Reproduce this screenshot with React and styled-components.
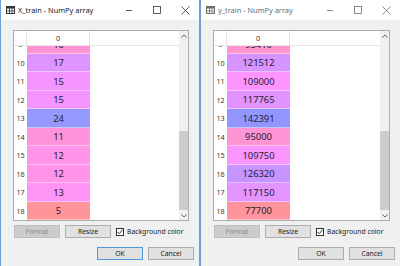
import React from 'react';
import styled, { createGlobalStyle } from 'styled-components';

const Global = createGlobalStyle`
  html, body { margin: 0; padding: 0; background: #f0f0f0; overflow: hidden; }
  body { font-family: "Noto Sans", "Open Sans", sans-serif; }
  * { box-sizing: border-box; }
`;

const Desktop = styled.div`
  display: flex;
  width: 400px;
  height: 266px;
  overflow: hidden;
`;

const Window = styled.div`
  flex: 0 0 ${p => p.$w}px;
  height: 266px;
  display: flex;
  flex-direction: column;
  background: #f0f0f0;
  border-left: 1px solid #6a9fd8;
  border-right: 1px solid #6a9fd8;
`;

const TitleBar = styled.div`
  height: 20px;
  flex: 0 0 20px;
  background: #ffffff;
  display: flex;
  align-items: center;
  padding-left: 5px;
`;

const TitleText = styled.span`
  margin-left: 3px;
  font-size: 7.4px;
  color: ${p => (p.$active ? '#1a1a1a' : '#6e6e6e')};
  white-space: nowrap;
  flex: 1;
`;

const Controls = styled.div`
  display: flex;
  height: 100%;
`;

const CtrlButton = styled.div`
  width: 28px;
  height: 100%;
  display: flex;
  align-items: center;
  justify-content: center;
`;

const Body = styled.div`
  flex: 1;
  display: flex;
  flex-direction: column;
  padding: 10px 10px 0 12px;
`;

const Frame = styled.div`
  height: 191px;
  border: 1px solid #adadad;
  display: flex;
  background: #ffffff;
`;

const TableView = styled.div`
  flex: 1;
  display: flex;
  flex-direction: column;
  min-width: 0;
`;

const HeaderRow = styled.div`
  height: 15px;
  flex: 0 0 15px;
  display: flex;
  border-bottom: 1px solid #e6e6e6;
`;

const IndexHeader = styled.div`
  width: 13px;
  border-right: 1px solid #e0e0e0;
`;

const ColHeader = styled.div`
  width: 63px;
  border-right: 1px solid #e0e0e0;
  font-size: 7.4px;
  color: #333;
  display: flex;
  align-items: center;
  justify-content: center;
`;

const Rows = styled.div`
  flex: 1;
  display: flex;
  flex-direction: column;
  justify-content: flex-end;
  overflow: hidden;
`;

const Row = styled.div`
  height: 18.5px;
  flex: 0 0 18.5px;
  display: flex;
`;

const IndexCell = styled.div`
  width: 13px;
  font-size: 7.2px;
  color: #333;
  display: flex;
  align-items: center;
  justify-content: center;
`;

const DataCell = styled.div`
  width: 63px;
  background: ${p => p.$bg};
  border-bottom: 1px solid rgba(255, 255, 255, 0.45);
  font-size: 9.4px;
  color: #262233;
  display: flex;
  align-items: center;
  justify-content: center;
  padding-top: 1px;
`;

const Scrollbar = styled.div`
  width: 9px;
  flex: 0 0 9px;
  background: #f0f0f0;
  display: flex;
  flex-direction: column;
`;

const Arrow = styled.div`
  height: 9px;
  flex: 0 0 9px;
  display: flex;
  align-items: center;
  justify-content: center;
`;

const Track = styled.div`
  flex: 1;
  display: flex;
  flex-direction: column;
  justify-content: flex-end;
  padding-bottom: 1px;
`;

const Thumb = styled.div`
  height: 79px;
  background: #cdcdcd;
`;

const ButtonRow = styled.div`
  display: flex;
  align-items: center;
  gap: 5px;
  margin-top: 4px;
  padding-left: 1px;
`;

const OkRow = styled.div`
  display: flex;
  justify-content: flex-end;
  gap: 5px;
  margin-top: 9px;
  margin-right: -5px;
`;

const Button = styled.div`
  width: 46px;
  height: 13px;
  display: flex;
  align-items: center;
  justify-content: center;
  font-size: 6.8px;
  border: 1px solid ${p => (p.$disabled ? '#bfbfbf' : p.$default ? '#4f95d8' : '#adadad')};
  background: ${p => (p.$disabled ? '#cccccc' : '#e1e1e1')};
  color: ${p => (p.$disabled ? '#8a8a8a' : '#222')};
`;

const CheckWrap = styled.div`
  display: flex;
  align-items: center;
  gap: 3px;
  margin-left: 0px;
`;

const Box = styled.div`
  width: 8px;
  height: 8px;
  border: 1px solid #333;
  background: #fff;
  display: flex;
  align-items: center;
  justify-content: center;
`;

const Label = styled.span`
  font-size: 6.8px;
  color: #222;
  white-space: nowrap;
`;

function cellColor(v, vmin, vmax) {
  const h = (0.66 + 0.33 * (vmax - v) / (vmax - vmin)) * 360;
  const max = 255, min = 255 * 0.3;
  const seg = h / 60;
  const i = Math.floor(seg) % 6;
  const f = seg - Math.floor(seg);
  const up = min + (max - min) * f;
  const down = max - (max - min) * f;
  const map = [
    [max, up, min], [down, max, min], [min, max, up],
    [min, down, max], [up, min, max], [max, min, down],
  ][i];
  const [r, g, b] = map.map(c => Math.round(0.6 * c + 0.4 * 255));
  return `rgb(${r},${g},${b})`;
}

const GridIcon = ({ color }) => (
  <svg width="9" height="8" viewBox="0 0 9 8">
    <rect x="0.5" y="0.5" width="8" height="7" fill="none" stroke={color} />
    <rect x="0.5" y="0.5" width="8" height="2" fill={color} />
    <line x1="3.5" y1="2" x2="3.5" y2="7.5" stroke={color} strokeWidth="0.8" />
    <line x1="6" y1="2" x2="6" y2="7.5" stroke={color} strokeWidth="0.8" />
    <line x1="0.5" y1="5" x2="8.5" y2="5" stroke={color} strokeWidth="0.8" />
  </svg>
);

const MinIcon = ({ color }) => (
  <svg width="8" height="8" viewBox="0 0 8 8">
    <line x1="1" y1="4.5" x2="7" y2="4.5" stroke={color} strokeWidth="0.8" />
  </svg>
);

const MaxIcon = ({ color }) => (
  <svg width="8" height="8" viewBox="0 0 8 8">
    <rect x="0.5" y="0.5" width="7" height="7" fill="none" stroke={color} strokeWidth="0.8" />
  </svg>
);

const CloseIcon = ({ color }) => (
  <svg width="9" height="9" viewBox="0 0 9 9">
    <path d="M0.5 0.5 L8.5 8.5 M8.5 0.5 L0.5 8.5" stroke={color} strokeWidth="0.8" />
  </svg>
);

const Chevron = ({ up }) => (
  <svg width="6" height="4" viewBox="0 0 6 4">
    <polyline points={up ? '0.5,3.5 3,1 5.5,3.5' : '0.5,0.5 3,3 5.5,0.5'} fill="none" stroke="#606060" strokeWidth="1" />
  </svg>
);

const CheckMark = () => (
  <svg width="6" height="6" viewBox="0 0 6 6">
    <polyline points="0.6,3 2.3,4.8 5.4,0.8" fill="none" stroke="#222" strokeWidth="0.9" />
  </svg>
);

function ArrayWindow({ title, data, vmin, vmax, width, active }) {
  const ic = active ? '#333' : '#6e6e6e';
  return (
    <Window $w={width}>
      <TitleBar>
        <GridIcon color={ic} />
        <TitleText $active={active}>{title}</TitleText>
        <Controls>
          <CtrlButton><MinIcon color={ic} /></CtrlButton>
          <CtrlButton><MaxIcon color={ic} /></CtrlButton>
          <CtrlButton><CloseIcon color={ic} /></CtrlButton>
        </Controls>
      </TitleBar>
      <Body>
        <Frame>
          <TableView>
            <HeaderRow>
              <IndexHeader />
              <ColHeader>0</ColHeader>
            </HeaderRow>
            <Rows>
              {data.map(([i, v]) => (
                <Row key={i}>
                  <IndexCell>{i}</IndexCell>
                  <DataCell $bg={cellColor(v, vmin, vmax)}>{v}</DataCell>
                </Row>
              ))}
            </Rows>
          </TableView>
          <Scrollbar>
            <Arrow><Chevron up /></Arrow>
            <Track><Thumb /></Track>
            <Arrow><Chevron /></Arrow>
          </Scrollbar>
        </Frame>
        <ButtonRow>
          <Button $disabled>Format</Button>
          <Button>Resize</Button>
          <CheckWrap>
            <Box><CheckMark /></Box>
            <Label>Background color</Label>
          </CheckWrap>
        </ButtonRow>
        <OkRow>
          <Button $default={active}>OK</Button>
          <Button>Cancel</Button>
        </OkRow>
      </Body>
    </Window>
  );
}

const xTrain = [[9, 10], [10, 17], [11, 15], [12, 15], [13, 24], [14, 11], [15, 12], [16, 12], [17, 13], [18, 5]];
const yTrain = [[9, 93410], [10, 121512], [11, 109000], [12, 117765], [13, 142391], [14, 95000], [15, 109750], [16, 126320], [17, 117150], [18, 77700]];

export default function App() {
  return (
    <>
      <Global />
      <Desktop>
        <ArrayWindow title="X_train - NumPy array" data={xTrain} vmin={5} vmax={24} width={200} active />
        <ArrayWindow title="y_train - NumPy array" data={yTrain} vmin={77000} vmax={143000} width={201} />
      </Desktop>
    </>
  );
}
